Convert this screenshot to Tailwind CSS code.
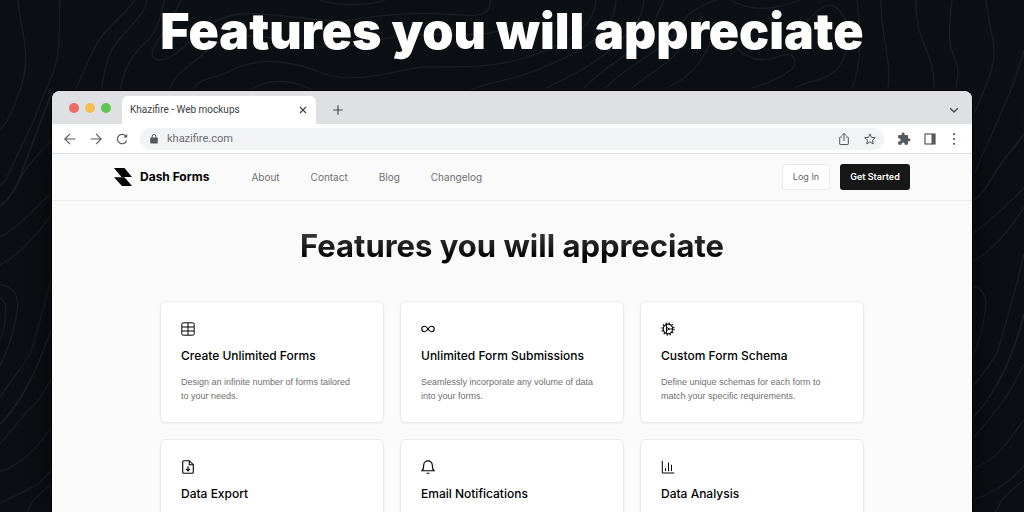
<!DOCTYPE html>
<html lang="en">
<head>
    <meta charset="UTF-8">
    <meta name="viewport" content="width=device-width, initial-scale=1.0">
    <title>Dash Forms - Features</title>
    <script src="https://cdn.jsdelivr.net/npm/@tailwindcss/browser@4"></script>
</head>
<body class="bg-[#0c1014] font-['Inter',sans-serif] antialiased">
    <div class="relative h-screen overflow-hidden flex flex-col">
        <!-- Contour lines -->
        <svg class="absolute inset-0 w-full h-full" viewBox="0 0 1024 512" preserveAspectRatio="xMidYMin slice" fill="none" stroke="#1b1f24" stroke-width="1.3" aria-hidden="true">
            <path d="M18 0C20 25 28 45 25 70C22 88 17 98 10 115C7 122 3 126 0 130"/>
            <path d="M60 0C58 25 62 45 54 70C48 86 42 98 35 118C25 140 14 160 6 180L0 186"/>
            <path d="M135 0C125 15 108 25 98 42C88 58 82 75 75 92"/>
            <path d="M147 0C144 18 126 28 115 45C106 58 104 75 101 92"/>
            <path d="M165 0C158 20 160 30 143 45C130 58 122 72 120 92"/>
            <path d="M181 0C174 16 160 35 153 50C149 62 162 62 172 56C190 46 205 18 240 14C280 12 320 24 352 20C385 14 425 12 460 15C482 17 492 12 490 0"/>
            <path d="M170 92C172 72 190 68 205 52C225 32 262 34 290 42C320 50 350 48 380 40C430 26 480 45 512 25"/>
            <path d="M194 92C192 78 215 80 232 70C265 54 300 64 325 74C355 84 390 72 420 67C455 66 490 70 530 56C575 42 594 24 596 0"/>
            <path d="M248 92C270 74 300 82 315 92"/>
            <path d="M320 0C335 6 370 6 385 0"/>
            <path d="M466 92C480 84 500 82 520 76C560 62 616 40 616 0"/>
            <path d="M546 88C575 74 605 60 630 30C642 18 643 8 644 0"/>
            <path d="M584 88C610 60 645 50 654 22L664 0"/>
            <path d="M605 88C640 55 670 50 684 20C690 10 705 4 717 0"/>
            <path d="M632 88C650 72 672 64 684 42"/>
            <path d="M666 88C700 74 705 50 713 38"/>
            <path d="M730 0C755 14 780 8 800 0"/>
            <path d="M737 48C750 62 765 62 780 56C795 50 798 62 792 69C778 80 765 84 752 88"/>
            <path d="M795 88C810 78 835 84 845 55C856 25 838 0 825 6C812 14 805 24 795 36"/>
            <path d="M857 0C860 30 863 62 852 88"/>
            <path d="M881 0C880 35 892 58 888 88"/>
            <path d="M916 0C915 45 935 50 934 88"/>
            <path d="M952 0C950 20 947 40 953 54C960 66 958 78 956 88"/>
            <path d="M986 0C988 25 998 45 992 68C986 90 974 112 974 114"/>
            <path d="M1024 50C1015 85 1000 115 974 174"/>
            <path d="M52 92C42 118 26 160 22 172C16 190 6 202 0 206" stroke-width="1.8"/>
            <path d="M52 140C42 150 32 160 24 172C16 190 8 200 0 206"/>
            <path d="M52 192C35 208 18 228 0 237"/>
            <path d="M52 214C36 236 18 256 0 265"/>
            <path d="M0 285C12 286 20 294 17 312C14 332 8 350 0 366"/>
            <path d="M0 298C7 302 6 310 5 320C4 330 2 336 0 340"/>
            <path d="M52 276C42 310 36 340 30 354C20 370 10 382 0 397"/>
            <path d="M52 328C40 360 25 400 0 424" stroke-width="1.8"/>
            <path d="M52 376C46 390 36 406 30 408C20 420 10 432 0 444"/>
            <path d="M52 426C40 442 30 460 0 472"/>
            <path d="M52 470C40 486 20 494 0 503"/>
            <path d="M52 484C40 492 30 502 28 512"/>
            <path d="M972 200C982 198 990 180 998 168C1006 156 1016 146 1024 134" stroke-width="1.8"/>
            <path d="M972 234C990 222 1008 204 1024 188"/>
            <path d="M974 261C992 250 1010 230 1024 207"/>
            <path d="M972 286C982 287 988 296 985 312C982 334 978 346 972 358"/>
            <path d="M972 388C985 370 996 358 998 350C1006 322 1016 290 1024 254"/>
            <path d="M972 418C995 396 1012 360 1024 314" stroke-width="1.8"/>
            <path d="M972 440C990 418 1002 404 1008 394C1014 384 1020 372 1024 364"/>
            <path d="M974 468C998 460 1010 438 1024 420"/>
            <path d="M974 500C996 492 1012 480 1024 466"/>
            <path d="M996 512C1000 498 1012 490 1024 480"/>
        </svg>

        <h1 class="relative pt-[3px] pb-8 text-center text-[50px] leading-[56px] font-black text-white">Features you will appreciate</h1>

        <div class="relative flex-1 w-full max-w-[920px] mx-auto rounded-t-lg overflow-hidden bg-[#fafafa] ring-1 ring-black shadow-2xl shadow-black flex flex-col">
            <!-- Tab strip -->
            <div class="h-[33px] shrink-0 bg-[#dfe0e4] flex items-end pl-4 pr-3 font-['Roboto',sans-serif]">
                <div class="flex gap-1.5 self-center pl-px pt-px">
                    <span class="size-2.5 rounded-full bg-[#ed6b60]"></span>
                    <span class="size-2.5 rounded-full bg-[#f5be4f]"></span>
                    <span class="size-2.5 rounded-full bg-[#61c554]"></span>
                </div>
                <div class="ml-[11px] h-7 w-[194px] rounded-t-md bg-white flex items-center justify-between px-2">
                    <span class="text-[10px] leading-4 text-[#3c4043]">Khazifire - Web mockups</span>
                    <button type="button" aria-label="Close tab" class="size-2.5">
                        <svg viewBox="0 0 10 10" fill="none" stroke="#3c4043" stroke-width="1.1"><path d="M2 2l6 6M8 2l-6 6"/></svg>
                    </button>
                </div>
                <button type="button" aria-label="New tab" class="mb-2 ml-4 size-3">
                    <svg viewBox="0 0 12 12" fill="none" stroke="#46494d" stroke-width="1.2"><path d="M6 1.2v9.6M1.2 6h9.6"/></svg>
                </button>
                <button type="button" aria-label="Search tabs" class="mb-2 ml-auto size-3">
                    <svg viewBox="0 0 12 12" fill="none" stroke="#46494d" stroke-width="1.3"><path d="M2.2 4.2L6 8l3.8-3.8"/></svg>
                </button>
            </div>

            <!-- Toolbar -->
            <div class="h-[30px] shrink-0 bg-white border-b border-[#dcdddf] flex items-center pl-[11px] pr-[13px] text-[#55585c] font-['Roboto',sans-serif]">
                <div class="flex gap-3">
                    <button type="button" aria-label="Back" class="size-3.5"><svg viewBox="0 0 14 14" fill="none" stroke="currentColor" stroke-width="1.1"><path d="M12.5 7H2M7 1.8L1.8 7L7 12.2"/></svg></button>
                    <button type="button" aria-label="Forward" class="size-3.5"><svg viewBox="0 0 14 14" fill="none" stroke="currentColor" stroke-width="1.1"><path d="M1.5 7H12M7 1.8L12.2 7L7 12.2"/></svg></button>
                    <button type="button" aria-label="Reload" class="size-3.5"><svg viewBox="0 0 14 14" fill="none" stroke="currentColor" stroke-width="1.2"><path d="M11.6 8.3A4.7 4.7 0 1 1 10.4 3.7L11.6 5"/><path d="M12.2 1.8V5.6H8.4z" fill="currentColor" stroke="none"/></svg></button>
                </div>
                <div class="ml-[11px] h-[22px] flex-1 rounded-full bg-[#f1f3f4] flex items-center px-[7px]">
                    <svg class="size-3.5" viewBox="0 0 14 14" fill="none"><rect x="3.2" y="5.5" width="7.6" height="6" rx=".8" fill="#55585c"/><path d="M5.2 6V4.3a1.8 1.8 0 0 1 3.6 0V6" stroke="#55585c"/></svg>
                    <input type="text" aria-label="Address" value="khazifire.com" class="ml-1.5 flex-1 min-w-0 bg-transparent text-[11px] leading-4 text-[#6b6e72] outline-none">
                    <button type="button" aria-label="Share" class="size-3.5"><svg viewBox="0 0 14 14" fill="none" stroke="currentColor" stroke-width="1"><path d="M5 5H3.2a.5.5 0 0 0-.5.5V12a.5.5 0 0 0 .5.5h7.6a.5.5 0 0 0 .5-.5V5.5a.5.5 0 0 0-.5-.5H9M7 9V1.5M4.8 3.6L7 1.4l2.2 2.2"/></svg></button>
                    <button type="button" aria-label="Bookmark" class="ml-3 size-3.5"><svg viewBox="0 0 14 14" fill="none" stroke="currentColor" stroke-width="1"><path d="M7 1.9l1.5 3.5 3.8.3-2.9 2.5.9 3.7L7 9.9l-3.3 2 .9-3.7L1.7 5.7l3.8-.3z"/></svg></button>
                </div>
                <div class="ml-[13px] flex gap-3">
                    <button type="button" aria-label="Extensions" class="size-3.5"><svg viewBox="0 0 24 24" fill="currentColor"><path d="M20.5 11H19V7c0-1.1-.9-2-2-2h-4V3.5a2.5 2.5 0 0 0-5 0V5H4c-1.1 0-2 .9-2 2v3.8h1.5a2.7 2.7 0 0 1 0 5.4H2V20c0 1.1.9 2 2 2h3.8v-1.5a2.7 2.7 0 0 1 5.4 0V22H17c1.1 0 2-.9 2-2v-4h1.5a2.5 2.5 0 0 0 0-5z"/></svg></button>
                    <button type="button" aria-label="Side panel" class="size-3.5"><svg viewBox="0 0 14 14"><rect x="2" y="2" width="10" height="10" fill="none" stroke="currentColor" stroke-width="1.2"/><path d="M8.5 2H12v10H8.5z" fill="currentColor"/></svg></button>
                    <button type="button" aria-label="Menu" class="h-3.5 w-2.5"><svg viewBox="0 0 10 14" fill="currentColor"><circle cx="5" cy="2.2" r="1.1"/><circle cx="5" cy="7" r="1.1"/><circle cx="5" cy="11.8" r="1.1"/></svg></button>
                </div>
            </div>

            <!-- Site header -->
            <header class="h-[47px] shrink-0 border-b border-[#ebebeb] flex items-center px-[62px]">
                <a href="#" class="flex items-center gap-2 text-[12px] leading-4 font-bold text-black">
                    <svg class="size-[18px]" viewBox="0 0 18 18" fill="#000" aria-hidden="true"><path d="M0 0H10.5L18 9H7.5z"/><path d="M0 9.3H10.5L18 18H8z"/></svg>
                    Dash Forms
                </a>
                <nav class="ml-[42px] flex gap-[31px] text-[10px] leading-4 text-[#6f6f6f]">
                    <a href="#">About</a>
                    <a href="#">Contact</a>
                    <a href="#">Blog</a>
                    <a href="#">Changelog</a>
                </nav>
                <div class="ml-auto flex gap-2.5 text-[9px] leading-4">
                    <button type="button" class="h-[26px] w-12 rounded-[3px] border border-[#ebebeb] bg-white text-[#666]">Log In</button>
                    <button type="button" class="h-[26px] w-[70px] rounded-[3px] bg-[#171717] font-semibold text-white">Get Started</button>
                </div>
            </header>

            <!-- Features -->
            <main class="w-full max-w-[704px] mx-auto">
                <h2 class="pt-[25px] pb-[35px] text-center text-[31px] leading-10 font-bold"><span class="bg-linear-to-b from-[#444] via-[#171717] via-60% to-black bg-clip-text text-transparent">Features you will appreciate</span></h2>

                <div class="grid grid-cols-3 auto-rows-fr gap-4 text-black">
                    <section class="rounded-md border border-[#ebebeb] bg-white px-5 pt-5 pb-[19px] shadow-xs">
                        <svg class="size-3.5" viewBox="0 0 14 14" fill="none" stroke="currentColor"><rect x=".8" y=".8" width="12.4" height="12.4" rx="1.4"/><path d="M7 1v12M1 5h12M1 9h12"/></svg>
                        <h3 class="mt-3 text-[12px] leading-4 font-medium">Create Unlimited Forms</h3>
                        <p class="mt-[11px] mr-1.5 font-['Liberation_Sans',sans-serif] text-[9px] leading-[14px] text-[#6f6f6f]">Design an infinite number of forms tailored to your needs.</p>
                    </section>
                    <section class="rounded-md border border-[#ebebeb] bg-white px-5 pt-5 pb-[19px] shadow-xs">
                        <svg class="size-3.5" viewBox="0 0 14 14" fill="none" stroke="currentColor" stroke-width="1.1"><path d="M7 7C5.8 5.2 4.9 4.3 3.5 4.3a2.7 2.7 0 0 0 0 5.4C4.9 9.7 5.8 8.8 7 7s2.1-2.7 3.5-2.7a2.7 2.7 0 0 1 0 5.4C9.1 9.7 8.2 8.8 7 7z"/></svg>
                        <h3 class="mt-3 text-[12px] leading-4 font-medium">Unlimited Form Submissions</h3>
                        <p class="mt-[11px] mr-1.5 font-['Liberation_Sans',sans-serif] text-[9px] leading-[14px] text-[#6f6f6f]">Seamlessly incorporate any volume of data into your forms.</p>
                    </section>
                    <section class="rounded-md border border-[#ebebeb] bg-white px-5 pt-5 pb-[19px] shadow-xs">
                        <svg class="size-3.5" viewBox="0 0 14 14" fill="none" stroke="currentColor"><circle cx="7" cy="7" r="4.8" stroke-width="1.2"/><circle cx="7" cy="7" r="6" stroke-width="1.3" stroke-dasharray="1.2 1.942"/><path d="M5.5 2.6V5.6M5.5 8.4V11.4M8.4 7H12"/><path d="M5.5 5.3L8.5 7L5.5 8.7z"/></svg>
                        <h3 class="mt-3 text-[12px] leading-4 font-medium">Custom Form Schema</h3>
                        <p class="mt-[11px] mr-1.5 font-['Liberation_Sans',sans-serif] text-[9px] leading-[14px] text-[#6f6f6f]">Define unique schemas for each form to match your specific requirements.</p>
                    </section>
                    <section class="rounded-md border border-[#ebebeb] bg-white px-5 pt-5 pb-[19px] shadow-xs">
                        <svg class="size-3.5" viewBox="0 0 14 14" fill="none" stroke="currentColor" stroke-width="1.1"><path d="M8.3.7H3A1.3 1.3 0 0 0 1.7 2v10A1.3 1.3 0 0 0 3 13.3h8a1.3 1.3 0 0 0 1.3-1.3V4.7z"/><path d="M8.3.7v4h4M7 6.2v4.6M5 8.9l2 2 2-2"/></svg>
                        <h3 class="mt-3 text-[12px] leading-4 font-medium">Data Export</h3>
                    </section>
                    <section class="rounded-md border border-[#ebebeb] bg-white px-5 pt-5 pb-[19px] shadow-xs">
                        <svg class="size-3.5" viewBox="0 0 14 14" fill="none" stroke="currentColor" stroke-width="1.1"><path d="M1 10.7C2.3 9.7 2.7 8.5 2.7 5.2a4.3 4.3 0 0 1 8.6 0C11.3 8.5 11.7 9.7 13 10.7zM5.6 13.2h2.8"/></svg>
                        <h3 class="mt-3 text-[12px] leading-4 font-medium">Email Notifications</h3>
                    </section>
                    <section class="rounded-md border border-[#ebebeb] bg-white px-5 pt-5 pb-[19px] shadow-xs">
                        <svg class="size-3.5" viewBox="0 0 14 14" fill="none" stroke="currentColor"><path d="M1.3.8V13H13.3M4.5 11V8.2M7.5 11V2.5M10.5 11V4.8"/></svg>
                        <h3 class="mt-3 text-[12px] leading-4 font-medium">Data Analysis</h3>
                    </section>
                </div>
            </main>
        </div>
    </div>
</body>
</html>
